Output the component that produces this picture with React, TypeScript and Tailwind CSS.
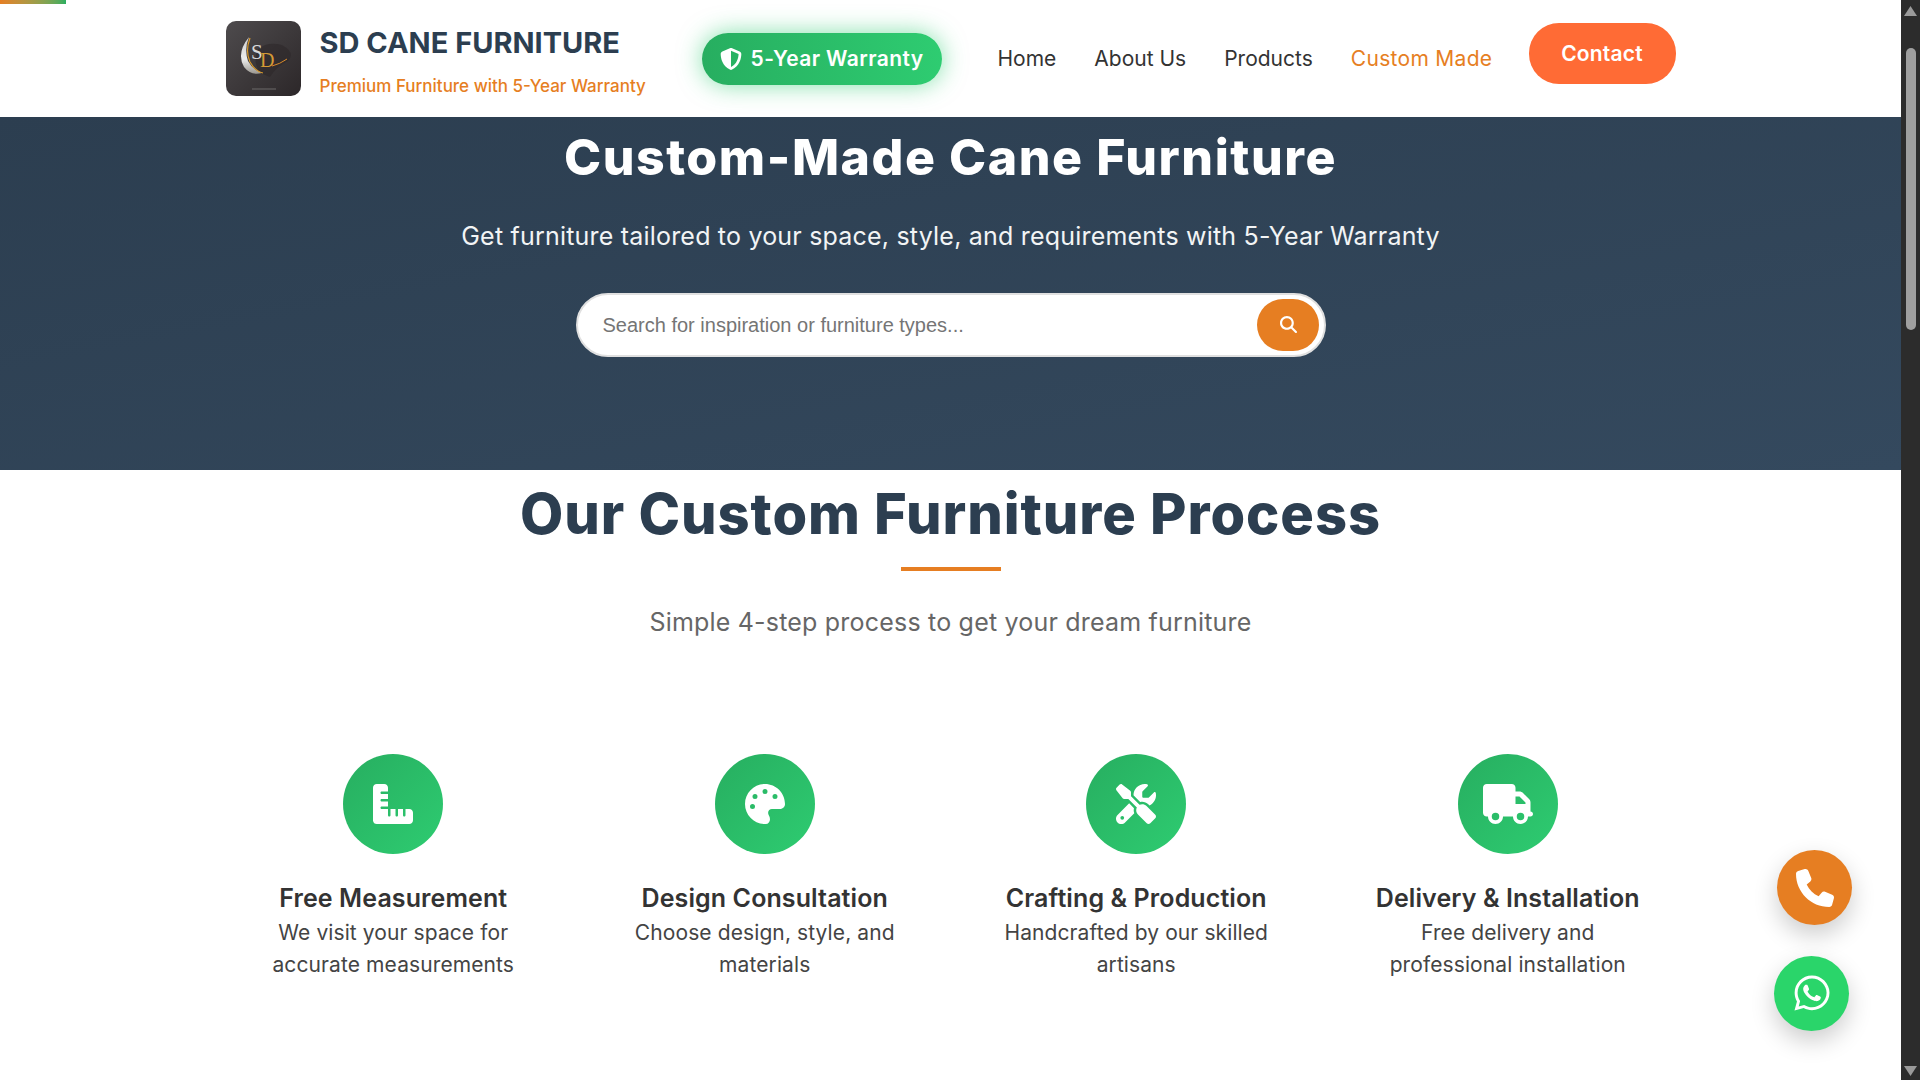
import { FaPalette, FaPhone, FaRulerCombined, FaScrewdriverWrench, FaShieldHalved, FaTruck, FaWhatsapp, FaMagnifyingGlass } from "react-icons/fa6";

const steps = [
  { title: "Free Measurement", lines: ["We visit your space for", "accurate measurements"], icon: <FaRulerCombined /> },
  { title: "Design Consultation", lines: ["Choose design, style, and", "materials"], icon: <FaPalette /> },
  { title: "Crafting & Production", lines: ["Handcrafted by our skilled", "artisans"], icon: <FaScrewdriverWrench /> },
  { title: "Delivery & Installation", lines: ["Free delivery and", "professional installation"], icon: <FaTruck className="h-10 w-[50px]" /> },
];

function Logo() {
  return (
    <svg width="75" height="75" viewBox="0 0 75 75" className="shrink-0 rounded-[10px]">
      <defs>
        <linearGradient id="logoBg" x1="0" y1="0" x2="1" y2="1">
          <stop offset="0" stopColor="#4e4b4d" />
          <stop offset="1" stopColor="#2c2729" />
        </linearGradient>
        <linearGradient id="feather" x1="0" y1="0" x2="0" y2="1">
          <stop offset="0" stopColor="#cfcfcf" />
          <stop offset="0.6" stopColor="#ececec" />
          <stop offset="1" stopColor="#9a9790" />
        </linearGradient>
      </defs>
      <rect width="75" height="75" fill="url(#logoBg)" />
      <path d="M34 52 Q26 40 32 28 Q42 20 56 24 Q70 32 62 40 Q50 46 44 56Z" fill="#2b2628" opacity="0.55" />
      <path d="M23 16 Q10 32 18 46 Q25 55 36 52 Q26 48 22 40 Q18 28 23 16Z" fill="url(#feather)" />
      <path d="M24 17 Q19 30 24 41 Q29 50 37 52" stroke="#d99a2b" strokeWidth="1.2" fill="none" />
      <path d="M46 45 Q54 43 61 38" stroke="#d98a2b" strokeWidth="1" fill="none" />
      <text x="25" y="38" fontFamily="Liberation Serif, serif" fontSize="21" fill="#d8d8d8">S</text>
      <text x="34" y="46" fontFamily="Liberation Serif, serif" fontSize="20" fill="#d59a35">D</text>
      <rect x="26" y="67.5" width="24" height="1" fill="#6d6a6b" />
    </svg>
  );
}

export default function App() {
  return (
    <div className="flex h-screen overflow-hidden bg-white font-['Inter',sans-serif]">
      <main className="relative min-w-0 flex-1">
        <div className="absolute left-0 top-0 z-10 h-1 w-[66px] bg-gradient-to-r from-[#e67e22] to-[#27ae60]" />

        <header className="h-[117px] bg-white">
          <div className="mx-auto flex h-full w-[1450px] items-center">
            <Logo />
            <div className="ml-[19px] w-[350px] pt-[2px]">
              <div className="text-[29px] font-bold leading-[42px] text-[#2c3e50]">SD CANE FURNITURE</div>
              <div className="mt-[10px] text-[17px] font-medium leading-6 text-[#e67e22]">Premium Furniture with 5-Year Warranty</div>
            </div>
            <div className="ml-[32px] flex h-[52px] w-[240px] items-center justify-center gap-[9px] rounded-[30px] bg-gradient-to-r from-[#27ae60] to-[#2ecc71] pt-[1px] text-[21px] font-semibold tracking-[0.4px] text-white shadow-[0_0_25px_rgba(46,204,113,0.6)]">
              <FaShieldHalved className="text-[22px]" />
              5-Year Warranty
            </div>
            <nav className="ml-[56px] flex gap-[38px] text-[21px] leading-[30px] text-[#333]">
              <a>Home</a>
              <a>About Us</a>
              <a>Products</a>
              <a className="tracking-[0.3px] text-[#e67e22]">Custom Made</a>
            </nav>
            <a className="mb-[11px] ml-auto flex h-[61px] w-[147px] items-center justify-center rounded-[30px] bg-[#ff6b35] pt-[1px] text-[21px] font-semibold tracking-[0.2px] text-white">Contact</a>
          </div>
        </header>

        <section className="flex h-[353px] flex-col items-center bg-gradient-to-br from-[#2c3e50] to-[#34495e] pt-[4px] text-white">
          <h1 className="text-[50px] font-extrabold leading-[72px] tracking-[1.55px]">Custom-Made Cane Furniture</h1>
          <p className="mt-[25px] text-[25px] leading-9 tracking-[0.2px] text-[#f2f4f5]">Get furniture tailored to your space, style, and requirements with 5-Year Warranty</p>
          <div className="mt-[39px] flex h-16 w-[750px] items-center rounded-[50px] border-2 border-[#e0e0e0] bg-white pl-[25px] pr-[5px]">
            <input
              readOnly
              placeholder="Search for inspiration or furniture types..."
              className="min-w-0 flex-1 bg-transparent font-['Liberation_Sans',sans-serif] text-[20px] text-[#333] outline-none placeholder:text-[#757575]"
            />
            <button className="flex h-[52px] w-[62px] items-center justify-center rounded-[50px] bg-[#e67e22] pb-[2px] pl-[1px] text-white">
              <FaMagnifyingGlass className="text-[17px]" />
            </button>
          </div>
        </section>

        <section className="pt-[2px]">
          <h2 className="text-center text-[56px] font-extrabold leading-[84px] tracking-[0.95px] text-[#2c3e50]">Our Custom Furniture Process</h2>
          <div className="mx-auto mt-[11px] h-1 w-[100px] bg-[#e67e22]" />
          <p className="mt-[33px] text-center text-[25px] leading-9 tracking-[0.2px] text-[#666]">Simple 4-step process to get your dream furniture</p>
          <div className="mx-auto mt-[114px] grid w-[1450px] grid-cols-4 gap-9">
            {steps.map(({ title, lines, icon }) => (
              <div key={title} className="flex flex-col items-center text-center">
                <div className="flex h-[100px] w-[100px] items-center justify-center rounded-full bg-gradient-to-br from-[#27ae60] to-[#2ecc71] text-[40px] text-white">
                  {icon}
                </div>
                <h3 className="mt-[26px] text-[25px] font-semibold leading-9 tracking-[0.1px] text-[#333]">{title}</h3>
                <p className="mt-[1px] text-[21px] leading-8 tracking-[0.1px] text-[#444]">
                  {lines[0]}
                  <br />
                  {lines[1]}
                </p>
              </div>
            ))}
          </div>
        </section>

        <a className="absolute left-[1777px] top-[850px] flex h-[75px] w-[75px] items-center justify-center rounded-full bg-[#e67e22] text-[38px] text-white shadow-[0_10px_25px_rgba(0,0,0,0.2)]">
          <FaPhone />
        </a>
        <a className="absolute left-[1774px] top-[956px] flex h-[75px] w-[75px] items-center justify-center rounded-full bg-[#2ad56a] pb-[2px] text-[40px] text-white shadow-[0_10px_25px_rgba(0,0,0,0.2)]">
          <FaWhatsapp />
        </a>
      </main>

      <aside className="relative flex w-[19px] shrink-0 flex-col items-center bg-[#2c2c2c]">
        <svg width="13" height="10" viewBox="0 0 13 10" className="mt-[6px]"><polygon points="6.5,0 13,10 0,10" fill="#9a9a9a" /></svg>
        <div className="mt-[32px] h-[282px] w-[10px] rounded-[5px] bg-[#9f9f9f]" />
        <svg width="13" height="10" viewBox="0 0 13 10" className="mb-[4px] mt-auto"><polygon points="0,0 13,0 6.5,10" fill="#9a9a9a" /></svg>
      </aside>
    </div>
  );
}
